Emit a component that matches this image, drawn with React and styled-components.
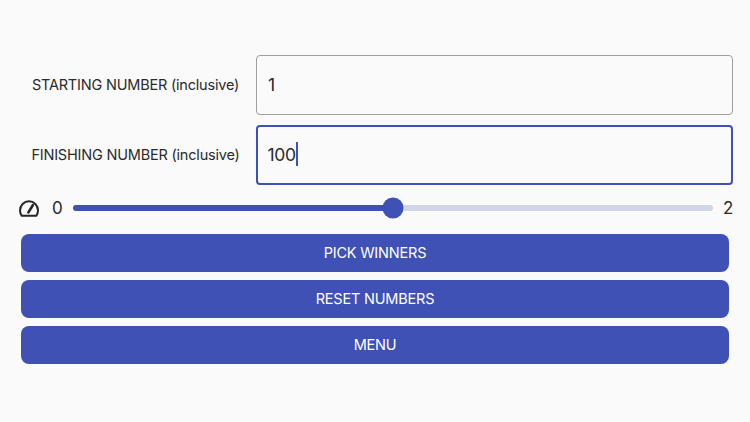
import React from "react";
import styled, { createGlobalStyle } from "styled-components";

const Global = createGlobalStyle`
  html, body { margin: 0; padding: 0; background: #fafafa; }
  body { font-family: Inter, "Liberation Sans", sans-serif; }
`;

const Page = styled.div`
  width: 750px;
  height: 422px;
  box-sizing: border-box;
  padding: 55px 17px 0 21px;
  display: flex;
  flex-direction: column;
  background: #fafafa;
  overflow: hidden;
`;

const FieldRow = styled.div`
  display: flex;
  align-items: center;
  gap: 6px;
  height: 60px;
  margin-bottom: 10px;
`;

const Label = styled.div`
  width: 229px;
  padding-bottom: 2px;
  text-align: center;
  font-size: 14.5px;
  letter-spacing: -0.2px;
  color: #2a2a2a;
  white-space: nowrap;
`;

const Field = styled.div`
  flex: 1;
  height: 60px;
  box-sizing: border-box;
  border: ${(p) => (p.$focused ? "2.5px solid #3f51b5" : "1px solid #9e9e9e")};
  border-radius: 4px;
  padding-left: ${(p) => (p.$focused ? "9.5px" : "11px")};
  padding-bottom: 2px;
  display: flex;
  align-items: center;
  font-size: 17.5px;
  letter-spacing: -0.3px;
  color: #2a2a2a;
`;

const Caret = styled.span`
  display: inline-block;
  width: 2px;
  height: 24px;
  background: #3f51b5;
`;

const SliderRow = styled.div`
  display: flex;
  align-items: center;
  height: 26px;
  margin-bottom: 13px;
`;

const Gauge = styled.svg`
  width: 20px;
  height: 17px;
  margin-left: -2px;
  flex: none;
`;

const Bound = styled.span`
  width: ${(p) => p.$w}px;
  margin-left: ${(p) => p.$ml}px;
  font-size: 17px;
  line-height: 26px;
  color: #2a2a2a;
  flex: none;
`;

const Track = styled.div`
  position: relative;
  width: 640px;
  height: 6px;
  margin-top: -1px;
  margin-left: 11px;
  border-radius: 3px;
  background: #d1d5e8;
`;

const Fill = styled.div`
  height: 100%;
  border-radius: 3px;
  background: #3f51b5;
`;

const Thumb = styled.div`
  position: absolute;
  top: 50%;
  width: 21px;
  height: 21px;
  border-radius: 50%;
  background: #3f51b5;
  transform: translate(-50%, -50%);
`;

const Buttons = styled.div`
  display: flex;
  flex-direction: column;
  gap: 8px;
`;

const Button = styled.button`
  width: 708px;
  height: 38px;
  border: 0;
  border-radius: 8px;
  padding: 0 0 2px;
  background: #3f51b5;
  color: #fff;
  font: 400 14.5px Inter, "Liberation Sans", sans-serif;
  letter-spacing: -0.2px;
`;

export default function App() {
  const value = 50;
  return (
    <>
      <Global />
      <Page>
        <FieldRow>
          <Label>STARTING NUMBER (inclusive)</Label>
          <Field>1</Field>
        </FieldRow>
        <FieldRow>
          <Label>FINISHING NUMBER (inclusive)</Label>
          <Field $focused>100<Caret /></Field>
        </FieldRow>
        <SliderRow>
          <Gauge viewBox="0 0 20 17" fill="none" stroke="#262626" strokeWidth="2" strokeLinecap="round" strokeLinejoin="round">
            <path d="M2.8 15.8 H17.2 C18.3 14.4 19 12.6 19 10.6 C19 5.4 15 1.2 10 1.2 C5 1.2 1 5.4 1 10.6 C1 12.6 1.7 14.4 2.8 15.8 Z" />
            <path d="M9.4 12.4 L13.8 5.2" strokeWidth="2.6" />
          </Gauge>
          <Bound $w={10} $ml={13}>0</Bound>
          <Track>
            <Fill style={{ width: `${value}%` }} />
            <Thumb style={{ left: `${value}%` }} />
          </Track>
          <Bound $w={10} $ml={10}>2</Bound>
        </SliderRow>
        <Buttons>
          <Button>PICK WINNERS</Button>
          <Button>RESET NUMBERS</Button>
          <Button>MENU</Button>
        </Buttons>
      </Page>
    </>
  );
}
